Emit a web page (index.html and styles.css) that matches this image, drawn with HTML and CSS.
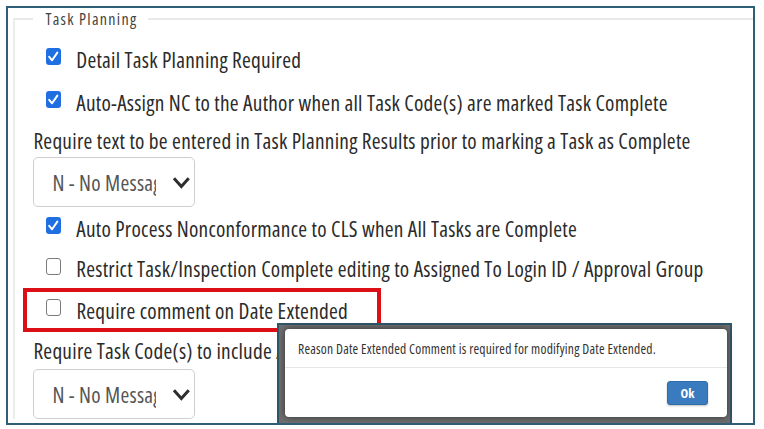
FILE: index.html
```html
<!DOCTYPE html>
<html lang="en">
<head>
<meta charset="utf-8">
<title>Task Planning</title>
<link rel="stylesheet" href="styles.css">
</head>
<body>
<div class="frame">
  <fieldset class="group">
    <legend class="legend">Task Planning</legend>

    <div class="row check-row r1">
      <span class="box checked"><svg viewBox="0 0 18 17" width="14.4" height="17" preserveAspectRatio="none"><path d="M4 8.8 L7.6 12.3 L14.2 4.6" /></svg></span>
      <span class="label">Detail Task Planning Required</span>
    </div>
    <div class="row check-row r2">
      <span class="box checked"><svg viewBox="0 0 18 17" width="14.4" height="17" preserveAspectRatio="none"><path d="M4 8.8 L7.6 12.3 L14.2 4.6" /></svg></span>
      <span class="label">Auto-Assign NC to the Author when all Task Code(s) are marked Task Complete</span>
    </div>
    <div class="row text-row r3">
      <span class="label">Require text to be entered in Task Planning Results prior to marking a Task as Complete</span>
    </div>
    <div class="select sel1">
      <span class="value">N - No Message</span>
      <svg class="chev" viewBox="0 0 24 13" width="18.7" height="13" preserveAspectRatio="none"><path d="M2.5 2.2 L12 10.5 L21.5 2.2" /></svg>
    </div>
    <div class="row check-row r4">
      <span class="box checked"><svg viewBox="0 0 18 17" width="14.4" height="17" preserveAspectRatio="none"><path d="M4 8.8 L7.6 12.3 L14.2 4.6" /></svg></span>
      <span class="label">Auto Process Nonconformance to CLS when All Tasks are Complete</span>
    </div>
    <div class="row check-row r5">
      <span class="box"></span>
      <span class="label">Restrict Task/Inspection Complete editing to Assigned To Login ID / Approval Group</span>
    </div>
    <div class="highlight">
      <div class="row check-row r6">
        <span class="box"></span>
        <span class="label">Require comment on Date Extended</span>
      </div>
    </div>
    <div class="row text-row r7">
      <span class="label">Require Task Code(s) to include A</span>
    </div>
    <div class="select sel2">
      <span class="value">N - No Message</span>
      <svg class="chev" viewBox="0 0 24 13" width="18.7" height="13" preserveAspectRatio="none"><path d="M2.5 2.2 L12 10.5 L21.5 2.2" /></svg>
    </div>
  </fieldset>

  <div class="modal">
    <div class="dialog">
      <div class="dialog-body">Reason Date Extended Comment is required for modifying Date Extended.</div>
      <div class="dialog-footer">
        <button class="ok" type="button">Ok</button>
      </div>
    </div>
  </div>
</div>
</body>
</html>
```

FILE: styles.css
```css
html, body {
  margin: 0;
  padding: 0;
  background: #ffffff;
  overflow: hidden;
}

body {
  padding: 6px 0 0 6px;
  font-family: "Open Sans", "Noto Sans", sans-serif;
  font-stretch: 75%;
  color: #2b2b2b;
}

.frame {
  position: relative;
  width: 749px;
  height: 419px;
  box-sizing: border-box;
  border: 2px solid #2e5f77;
  overflow: hidden;
  background: #ffffff;
}

.group {
  margin: 1px 0 0 5px;
  padding: 9px 0 0 0;
  border: none;
  border-top: 2px solid #e9e9e9;
  border-left: 2px solid #ececec;
  min-width: 0;
}

.legend {
  margin-left: 18.4px;
  padding: 0 11px 0 12px;
  font-size: 16px;
  line-height: 20px;
  letter-spacing: 1.3px;
  color: #444444;
}

.row {
  display: flex;
  align-items: center;
  white-space: nowrap;
}

.label {
  font-size: 21.3px;
  letter-spacing: 0.25px;
  color: #2b2b2b;
}

.check-row {
  padding-left: 31.4px;
}

.text-row {
  padding-left: 18.4px;
}

.r1 { height: 42px; }
.r2 { height: 44px; }
.r3 { height: 32px; }
.r4 { height: 42px; }
.r5 { height: 39px; }
.r6 { height: 36px; }
.r7 { height: 37px; }

.box {
  flex: none;
  width: 14.4px;
  height: 17px;
  box-sizing: border-box;
  margin-right: 15.5px;
  margin-bottom: 5px;
  border-radius: 3px;
  border: 1.4px solid #7b7b7b;
  background: #ffffff;
  display: flex;
  align-items: center;
  justify-content: center;
}

.box.checked {
  border: none;
  background: #1f6fe3;
}

.box svg path {
  fill: none;
  stroke: #ffffff;
  stroke-width: 2;
  stroke-linecap: round;
  stroke-linejoin: round;
  vector-effect: non-scaling-stroke;
}

.select {
  display: flex;
  align-items: center;
  width: 162px;
  height: 50px;
  box-sizing: border-box;
  margin-left: 18.4px;
  padding-left: 18px;
  border: 1px solid #cfcfcf;
  border-radius: 5px;
  background: #ffffff;
}

.sel1 { margin-top: 1px; }

.value {
  flex: none;
  width: 104px;
  overflow: hidden;
  white-space: nowrap;
  font-size: 21.3px;
  letter-spacing: 0.25px;
  color: #555555;
}

.chev {
  flex: none;
  margin-left: 16px;
}

.chev path {
  fill: none;
  stroke: #2e2e2e;
  stroke-width: 3;
  stroke-linejoin: miter;
  vector-effect: non-scaling-stroke;
}

.highlight {
  width: 358px;
  box-sizing: border-box;
  margin-left: 8.4px;
  border: 4px solid #dc0f16;
}

.highlight .check-row {
  padding-left: 19.1px;
}

.modal {
  position: absolute;
  left: 269px;
  top: 315px;
  width: 455px;
  height: 104px;
  box-sizing: border-box;
  border: 2px solid #2f5569;
  padding: 4px 3px 0 6px;
  background: #6d6d6d;
}

.dialog {
  width: 442px;
  height: 88px;
  background: #ffffff;
  border-radius: 4px;
  box-shadow: 0 0 6px rgba(0, 0, 0, 0.55);
  display: flex;
  flex-direction: column;
}

.dialog-body {
  height: 39px;
  box-sizing: border-box;
  padding-left: 13px;
  border-bottom: 1px solid #e6e6e6;
  display: flex;
  align-items: center;
  font-size: 13.6px;
  letter-spacing: 0.2px;
  color: #333333;
  white-space: nowrap;
}

.dialog-footer {
  flex: 1;
  display: flex;
  align-items: center;
  justify-content: flex-end;
  padding-right: 19px;
}

.ok {
  width: 41px;
  height: 24px;
  padding: 0;
  border: 1px solid #2f6ca8;
  border-radius: 3px;
  background: #3a7bc0;
  color: #ffffff;
  font-family: "Open Sans", "Noto Sans", sans-serif;
  font-stretch: 75%;
  font-size: 13px;
  font-weight: 700;
  box-shadow: 0 1px 2px rgba(0, 0, 0, 0.25);
}
```
